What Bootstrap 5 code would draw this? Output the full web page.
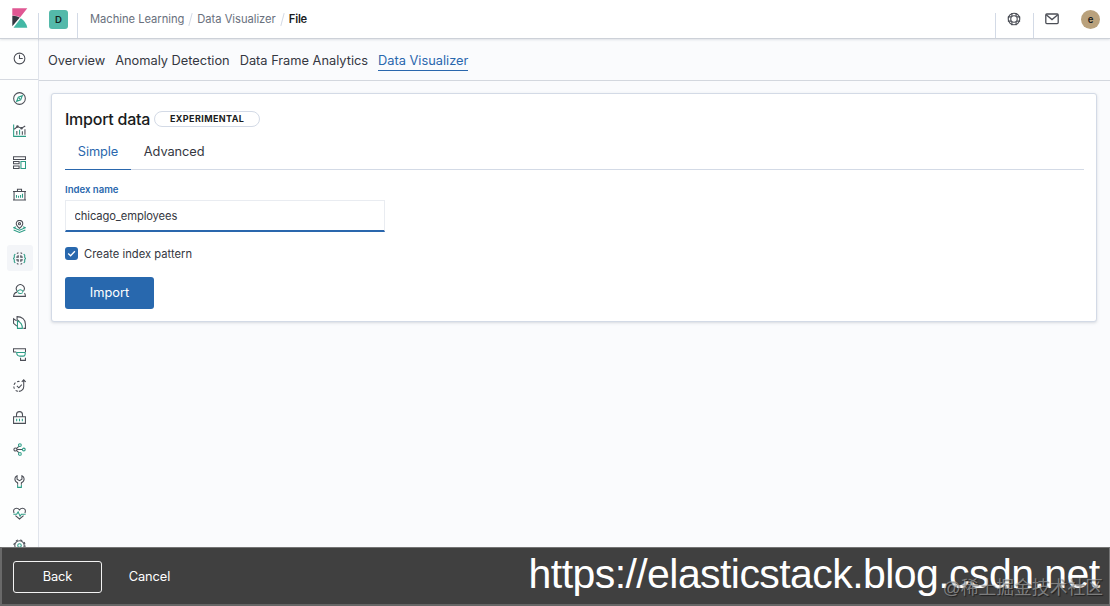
<!DOCTYPE html>
<html lang="en">
<head>
    <meta charset="UTF-8">
    <meta name="viewport" content="width=device-width, initial-scale=1.0">
    <title>Import data</title>
    <link href="https://cdn.jsdelivr.net/npm/bootstrap@5.3.0/dist/css/bootstrap.min.css" rel="stylesheet">
    <style>
        body { font-family: Inter, "Liberation Sans", sans-serif; font-size: 12.8px; line-height: 19px; color: #343741; background: #fafbfd; height: 606px; }
        svg { display: block; fill: none; stroke: #4b4e56; stroke-width: 1.3; }
        svg .teal { stroke: #2c9c85; }
        a { color: inherit; text-decoration: none; }

        /* header */
        .top-bar { height: 39px; border-bottom: 1px solid #cdd1d8; box-shadow: 0 1px 2px rgba(90, 100, 120, .16); position: relative; z-index: 2; }
        .logo-cell { width: 38px; padding-left: 12px; }
        .divided { border-left: 1px solid #d3dae6; height: 25px; margin-top: 13px; }
        .space-box { width: 19px; height: 19px; border-radius: 3px; background: #54b9aa; color: #17211f; font-size: 9.6px; font-weight: 600; margin: -12px 9px 0 10px; }
        .crumbs { font-size: 11.2px; color: #69707d; padding-left: 12px; margin-top: -12px; letter-spacing: -.03px; }
        .crumbs .slash { width: 1px; height: 13px; background: #d3dae6; transform: rotate(15deg); margin: 0 6px; }
        .crumbs b { font-weight: 600; color: #1a1c21; letter-spacing: -.2px; }
        .help { width: 38px; padding-left: 11px; }
        .help svg { margin-top: -1px; }
        .mail { width: 77px; padding-left: 11px; }
        .user { width: 19px; height: 19px; background: #b9a17c; color: #1a1c21; font-size: 9.6px; font-weight: 600; margin: -3px 0 0 22px; }

        /* sidebar */
        .side { width: 39px; border-right: 1px solid #e0e4eb; background: #fdfefe; }
        .side .recent { height: 41px; border-bottom: 1px solid #d6dae1; }
        .side .recent svg { margin-top: -1px; }
        .side .apps { padding: 5.5px 0 0 1px; gap: 5.95px; }
        .side a { width: 26px; height: 26px; border-radius: 3px; flex-shrink: 0; }
        .side a svg { width: 13px; height: 13px; }
        .side a.on { background: #f3f5f8; }

        /* page */
        .ml-tabs { height: 42px; border-bottom: 1px solid #d3d7de; padding: 2px 0 0 9px; gap: 10px; }
        .ml-tabs .on { color: #2a67ad; box-shadow: 0 1px 0 #2a67ad; }
        .panel { margin: 12px 13px 0 12px; height: 229px; background: #fff; border: 1px solid #d3dae6; border-radius: 3px; padding: 13px 12px 0 13px; box-shadow: 0 1px 3px rgba(90, 100, 120, .22); }
        .panel h1 { font-size: 16px; font-weight: 500; color: #1a1c21; line-height: 24px; letter-spacing: -.25px; }
        .beta { width: 106px; height: 16px; border: 1px solid #d3dae6; border-radius: 8px; font-size: 9px; font-weight: 700; letter-spacing: .4px; color: #1a1c21; margin-left: 4px; padding-bottom: 1px; }
        .form-tabs { height: 39px; border-bottom: 1px solid #d3dae6; }
        .form-tabs a { padding: 11px 12.8px 0; height: 39px; letter-spacing: -.08px; }
        .form-tabs a.on { color: #2a67ad; border-bottom: 1px solid #2a67ad; }
        .field-label { font-size: 9.6px; font-weight: 600; color: #2a67ad; line-height: 14px; margin: 13px 0 3px; }
        .field { width: 320px; height: 32px; padding: 1px 8.5px 0; font-size: 11.2px; letter-spacing: -.11px; color: #343741; border: 1px solid #e9ecf1; border-bottom: 2px solid #2a67ad; border-radius: 0; }
        .check-row { margin-top: 12px; height: 20px; }
        .tick { width: 13px; height: 13px; background: #2868ae; border-radius: 3px; margin-top: -1px; }
        .tick svg { stroke: #fff; stroke-width: 1.3; }
        .check-text { font-size: 11.2px; margin-left: 6px; letter-spacing: .02px; }
        .eui { height: 32px; width: 89px; padding: 0; font-size: 12.8px; border-radius: 3px; }
        .import, .import:hover { background: #2868ae; color: #fff; margin-top: 13px; }

        /* bottom bar */
        .bottom-bar { height: 59px; background: #404040; color: #fff; border: 1px solid #747474; border-left: 2px solid #696969; border-bottom: 2px solid #666; padding: 1px 0 0 11px; z-index: 3; }
        .back { border: 1px solid #f2f2f2; color: #fff; }
        .cancel { margin-left: 3px; }
        .bottom-bar .eui { letter-spacing: -.08px; }
        .site { right: 9.500px; bottom: 2px; font: 41px/56px "Liberation Sans", sans-serif; letter-spacing: -.57px; white-space: nowrap; }
        .credit { right: 6px; bottom: 4px; font: 17.8px/24px "Liberation Sans", "Noto Sans CJK SC", sans-serif; color: rgba(175, 175, 175, .62); text-shadow: 1px 1px 1px rgba(0, 0, 0, .5); white-space: nowrap; }
    </style>
</head>
<body class="d-flex flex-column overflow-hidden position-relative">
    <header class="top-bar bg-white d-flex flex-shrink-0">
        <div class="logo-cell flex-shrink-0 pt-2">
            <svg width="16" height="21" viewBox="0 0 16 21">
                <g stroke="none">
                    <path fill="#e05793" d="M.3.3h15L8.200 9.300Q4.500 7.400.3 7.600z"/>
                    <path fill="#343741" d="M.3 7.700Q4.500 7.500 7.800 9.500L.3 18.300z"/>
                    <path fill="#43b8a5" d="M8.700 10.300Q14 13.500 15.300 19.700H1.500z"/>
                </g>
            </svg>
        </div>
        <div class="divided d-flex align-items-center">
            <span class="space-box d-flex align-items-center justify-content-center">D</span>
        </div>
        <div class="divided d-flex align-items-center">
            <div class="crumbs d-flex align-items-center">
                <a href="#">Machine Learning</a><span class="slash"></span>
                <a href="#">Data Visualizer</a><span class="slash"></span>
                <b>File</b>
            </div>
        </div>
        <div class="divided help ms-auto">
            <svg width="14" height="14" viewBox="0 0 16 16">
                <circle cx="8" cy="8" r="6.600"/><circle cx="8" cy="8" r="3.700"/>
                <path d="M5.600 1v3.800M10.400 1v3.800M5.600 11.200V15M10.400 11.200V15M1 5.600h3.800M1 10.400h3.800M11.200 5.600H15M11.200 10.400H15"/>
            </svg>
        </div>
        <div class="divided mail d-flex">
            <svg width="14" height="12" viewBox="0 0 14 12">
                <rect x=".8" y="1" width="12.400" height="9.600" rx="1"/><path d="M1.200 1.700 7 6.600l5.800-4.900"/>
            </svg>
            <span class="user rounded-circle d-flex align-items-center justify-content-center">e</span>
        </div>
    </header>

    <div class="d-flex flex-grow-1">
        <nav class="side d-flex flex-column align-items-center flex-shrink-0">
            <div class="recent w-100 d-flex justify-content-center align-items-center">
                <svg width="13" height="13" viewBox="0 0 16 16"><circle cx="8" cy="8" r="6.600"/><path d="M8 3.500V8h4"/></svg>
            </div>
            <div class="apps d-flex flex-column">
                <!-- Discover -->
                <a href="#" class="d-flex align-items-center justify-content-center">
                    <svg viewBox="0 0 16 16"><circle cx="8" cy="8" r="7.200"/><path class="teal" d="M11.500 4.500 9.500 9.500 4.500 11.500 6.500 6.500zM7.300 7.300l1.400 1.400"/></svg>
                </a>
                <!-- Visualize -->
                <a href="#" class="d-flex align-items-center justify-content-center">
                    <svg viewBox="0 0 16 16"><path class="teal" d="M.8.5v14.700H16"/><path d="M1.500 6.500 5.500 3.200l5 2 4.500-2.700M4.700 8.500v4.800M11.500 9v4.300"/><path class="teal" d="M8.100 7v6.300"/><path d="M14.700 6.500v6.800"/><circle cx="5.500" cy="3.200" r=".9"/><circle cx="10.500" cy="5.200" r=".9"/></svg>
                </a>
                <!-- Dashboard -->
                <a href="#" class="d-flex align-items-center justify-content-center">
                    <svg viewBox="0 0 16 16"><path d="M.6 1h14.800v3.200H.6zM.6 6.800h6.900v2.700H.6zM.6 12.300h6.900v3H.6z"/><path class="teal" d="M9.800 6.800h5.600v8.500H9.800z"/></svg>
                </a>
                <!-- Canvas -->
                <a href="#" class="d-flex align-items-center justify-content-center">
                    <svg viewBox="0 0 16 16"><path d="M1.300 4.200h13.400v10.500H1.300zM0 4.200h16M0 14.700h16M5.500 4V1.500h5V4"/><path class="teal" d="M4.300 8.500V12M6.800 9.500V12M9.300 8.500V12M11.700 7.200V12"/></svg>
                </a>
                <!-- Maps -->
                <a href="#" class="d-flex align-items-center justify-content-center">
                    <svg viewBox="0 0 16 16"><path d="M8 10.300C5 7.400 4 6.100 4 4.500a4 4 0 0 1 8 0c0 1.600-1 2.900-4 5.800z"/><circle cx="8" cy="4.500" r="1.300"/><path class="teal" d="M3.500 8.200.8 9.500 8 12.500l7.200-3-2.700-1.300M.8 12.300l7.200 3 7.200-3"/></svg>
                </a>
                <!-- Machine learning -->
                <a href="#" class="on d-flex align-items-center justify-content-center">
                    <svg viewBox="0 0 16 16"><path class="teal" d="M2.800 2.500 1.600 4v2.500L.6 8l1 1.500V12l1.200 1.500M13.200 2.500 14.400 4v2.500l1 1.500-1 1.500V12l-1.200 1.500"/><path d="M6.700 1 4.700 1.700M9.300 1l2 .7M6.700 15l-2-.7M9.300 15l2-.7"/><path stroke-width="1.600" d="M6.300 4v2.200H4M9.700 4v2.200H12M6.300 12V9.800H4M9.700 12V9.800H12"/></svg>
                </a>
                <!-- Metrics -->
                <a href="#" class="d-flex align-items-center justify-content-center">
                    <svg viewBox="0 0 16 16"><path d="M5 8.600a4.900 4.900 0 1 1 8 0M5 10C2.500 10.500.9 12.500.7 15.200h14.600c0-1.500-.4-2.900-1.200-3.900"/><path class="teal" d="M5.200 9.800a3.900 3.900 0 0 1 7.400 0M6 10.600c1.800 1.500 4 1.500 6 0"/></svg>
                </a>
                <!-- Logs -->
                <a href="#" class="d-flex align-items-center justify-content-center">
                    <svg viewBox="0 0 16 16"><path d="M4.800 12.500.7 9V3.500L4.500 6M5 4.500V.8C11 .8 15.300 4.500 15.300 10v5.200h-2.500M5 4.500 8 7"/><path class="teal" d="M5.500 6.200c4 1.300 6 4.300 6 9h-6z"/></svg>
                </a>
                <!-- APM -->
                <a href="#" class="d-flex align-items-center justify-content-center">
                    <svg viewBox="0 0 16 16"><path d="M4 5H.6V1h14.800v4M9.300 12v3.200h6V12"/><path class="teal" d="M4.500 5.500h10.500V7.500Q14.800 10 12.500 10H8.500Q4.500 10 4.500 5.500z"/></svg>
                </a>
                <!-- Uptime -->
                <a href="#" class="d-flex align-items-center justify-content-center">
                    <svg viewBox="0 0 16 16"><path d="M13.200 1.200V9.200a6 6 0 0 1-6 6M10.800 3.600l2.400-2.600 2.400 2.600M4.800 8.500l2.400 2.300 3.600-3.800"/><path d="M8 3a6 6 0 0 0-7 6.200 6 6 0 0 0 6.200 6" stroke-dasharray="3 2.200"/></svg>
                </a>
                <!-- SIEM -->
                <a href="#" class="d-flex align-items-center justify-content-center">
                    <svg viewBox="0 0 16 16"><path d="M.7 7h14.600v8.200H.7zM4.300 7V4.500a3.700 3.700 0 0 1 7.400 0V7"/><path class="teal" d="M4.500 9.500v3M8 9.500v3M11.500 9.500v3"/></svg>
                </a>
                <!-- Graph -->
                <a href="#" class="d-flex align-items-center justify-content-center">
                    <svg viewBox="0 0 16 16"><circle cx="3" cy="8" r="1.900"/><path d="M4.500 6.700 7.300 4.200M4.500 9.300l2.800 2.500M5 8h6.300"/><circle class="teal" cx="8.500" cy="2.600" r="1.700"/><circle class="teal" cx="13.300" cy="8" r="1.700"/><circle class="teal" cx="8.500" cy="13.400" r="1.700"/></svg>
                </a>
                <!-- Dev tools -->
                <a href="#" class="d-flex align-items-center justify-content-center">
                    <svg viewBox="0 0 16 16"><path d="M5.700 12V9.500C3.500 8.500 2.300 6.800 2.300 4.800c0-1.600.9-3 2.700-3.900v4.300l3 1.800 3-1.800V.9c1.800.9 2.700 2.300 2.700 3.900 0 2-1.200 3.700-3.400 4.700V12"/><path class="teal" d="M5.700 12.200v3h4.600v-3"/></svg>
                </a>
                <!-- Monitoring -->
                <a href="#" class="d-flex align-items-center justify-content-center">
                    <svg viewBox="0 0 16 15"><path d="M1.300 7C-.1 3.500 1.500 1 4.300 1 6 1 7.300 2 8 3c.7-1 2-2 3.700-2 2.800 0 4.400 2.500 3 6M3 10l5 4.300 5-4.300"/><path class="teal" d="M.5 8.500h4L6.300 5.500l2.400 5.200 1.600-2.200h5.200"/></svg>
                </a>
                <!-- Management -->
                <a href="#" class="d-flex align-items-center justify-content-center">
                    <svg viewBox="0 0 16 16"><circle cx="8" cy="8" r="5.800"/><circle cx="8" cy="8" r="6.900" stroke-dasharray="2.700 2.720"/><circle class="teal" cx="8" cy="8" r="2.200"/></svg>
                </a>
            </div>
        </nav>

        <main class="flex-grow-1">
            <nav class="ml-tabs d-flex align-items-center">
                <a href="#">Overview</a>
                <a href="#">Anomaly Detection</a>
                <a href="#">Data Frame Analytics</a>
                <a href="#" class="on">Data Visualizer</a>
            </nav>
            <section class="panel">
                <div class="d-flex align-items-center">
                    <h1 class="mb-0">Import data</h1>
                    <span class="beta d-flex align-items-center justify-content-center">EXPERIMENTAL</span>
                </div>
                <div class="form-tabs d-flex">
                    <a href="#" class="on">Simple</a>
                    <a href="#">Advanced</a>
                </div>
                <label class="field-label d-block" for="indexName">Index name</label>
                <input id="indexName" class="field d-block" type="text" value="chicago_employees">
                <div class="d-flex align-items-center check-row">
                    <span class="tick"><svg width="13" height="13" viewBox="0 0 13 13"><path d="m3.200 6.500 2.400 2.300 4.300-4.600"/></svg></span>
                    <span class="check-text">Create index pattern</span>
                </div>
                <button class="btn eui import">Import</button>
            </section>
        </main>
    </div>

    <footer class="bottom-bar position-absolute bottom-0 start-0 w-100 d-flex align-items-center">
        <button class="btn eui back">Back</button>
        <button class="btn eui text-white cancel">Cancel</button>
        <span class="site position-absolute">https://elasticstack.blog.csdn.net</span>
        <span class="credit position-absolute">@稀土掘金技术社区</span>
    </footer>

    <script src="https://cdn.jsdelivr.net/npm/bootstrap@5.3.0/dist/js/bootstrap.bundle.min.js"></script>
</body>
</html>
